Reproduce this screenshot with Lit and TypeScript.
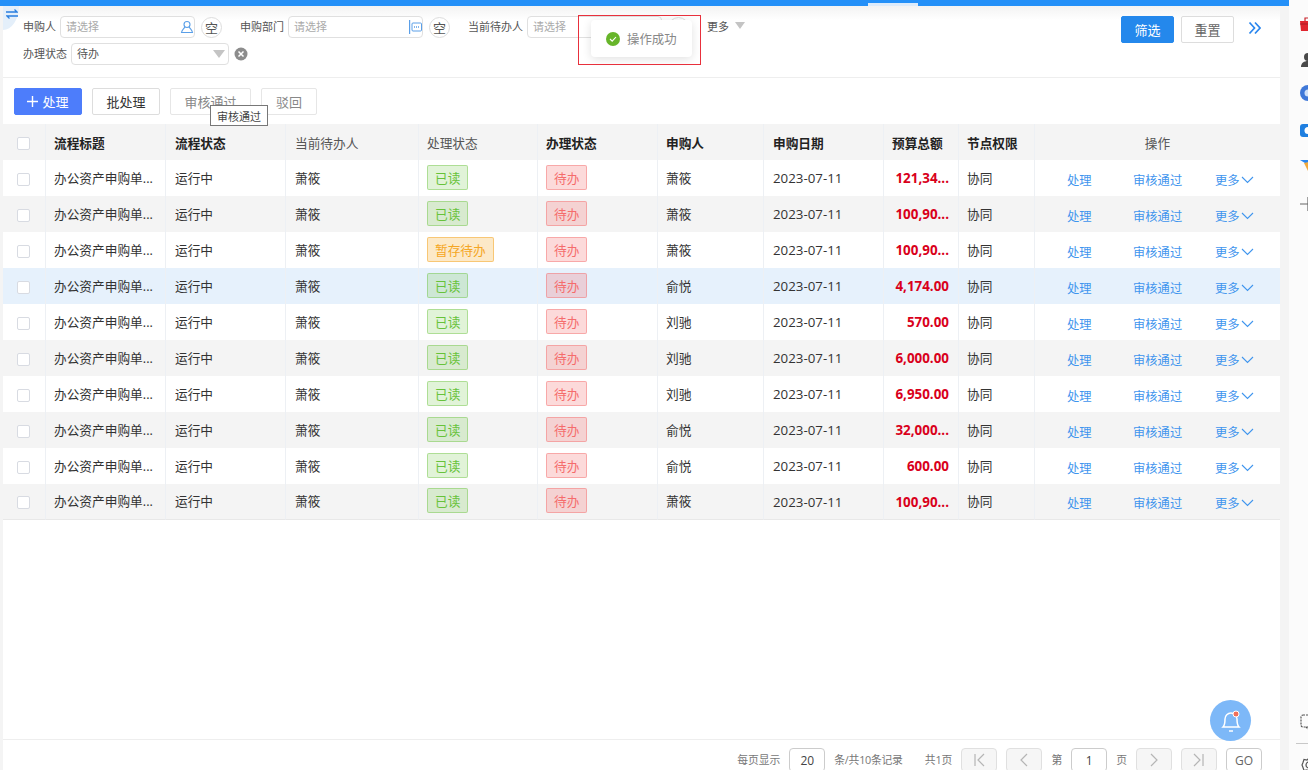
import { LitElement, css, html, svg } from "lit";
import { customElement } from "lit/decorators.js";

const rows = [
  { read: "已读", applicant: "萧筱", budget: "121,34..." },
  { read: "已读", applicant: "萧筱", budget: "100,90..." },
  { read: "暂存待办", applicant: "萧筱", budget: "100,90..." },
  { read: "已读", applicant: "俞悦", budget: "4,174.00", active: true },
  { read: "已读", applicant: "刘驰", budget: "570.00" },
  { read: "已读", applicant: "刘驰", budget: "6,000.00" },
  { read: "已读", applicant: "刘驰", budget: "6,950.00" },
  { read: "已读", applicant: "俞悦", budget: "32,000..." },
  { read: "已读", applicant: "俞悦", budget: "600.00" },
  { read: "已读", applicant: "萧筱", budget: "100,90..." },
];

const pagerIcon = (d: string) =>
  html`<svg width="14" height="16" viewBox="0 0 14 16" fill="none" stroke="#b5b5b5" stroke-width="1.2">${svg`<path d=${d} />`}</svg>`;

@customElement("app-root")
export class AppRoot extends LitElement {
  static styles = css`
    :host {
      display: block;
      font-family: "Open Sans", "Noto Sans CJK SC", sans-serif;
      color: #333;
    }
    * {
      box-sizing: border-box;
    }
    .page {
      position: relative;
      display: flex;
      height: 770px;
      overflow: hidden;
      background: #fbfbfb;
    }
    .main {
      width: 1289px;
      display: flex;
      flex-direction: column;
      background: #f4f4f4;
    }
    .top-bar {
      height: 6px;
      flex: none;
      display: flex;
      align-items: flex-end;
      background: #2490f8;
    }
    .top-tab {
      width: 50px;
      height: 3px;
      margin-left: 868px;
      background: #dcebfb;
    }
    .content {
      flex: 1;
      width: 1277px;
      margin-left: 3px;
      display: flex;
      flex-direction: column;
      background: #fff;
    }

    /* filter panel */
    .filter-panel {
      height: 72px;
      flex: none;
      display: flex;
      justify-content: space-between;
      padding: 10px 19px 0 20px;
      border-bottom: 1px solid #eee;
      background: linear-gradient(#f3f3f3, #fff 14px);
    }
    .filter-rows {
      display: flex;
      flex-direction: column;
      gap: 5px;
    }
    .filter-row {
      display: flex;
      align-items: center;
      height: 22px;
      font-size: 11px;
      color: #555;
    }
    .label {
      margin-right: 4px;
      padding-bottom: 2px;
      white-space: nowrap;
    }
    .input {
      width: 135px;
      height: 22px;
      display: flex;
      align-items: center;
      justify-content: space-between;
      padding: 0 0 2px 5px;
      border: 1px solid #e0e0e0;
      border-radius: 4px;
      background: #fff;
      color: #aaa;
    }
    .input svg {
      margin-top: 2px;
    }
    .input.select {
      width: 158px;
      padding-right: 3px;
      color: #555;
    }
    .input .caret {
      margin-top: 2px;
    }
    .empty {
      width: 21px;
      height: 21px;
      margin: 0 18px 0 6px;
      display: flex;
      align-items: center;
      justify-content: center;
      border: 1px solid #ddd;
      border-radius: 50%;
      font-size: 13px;
    }
    .caret {
      width: 0;
      height: 0;
      border-left: 6px solid transparent;
      border-right: 6px solid transparent;
      border-top: 8px solid #c4c4c4;
    }
    .more {
      display: flex;
      align-items: center;
      gap: 6px;
      margin-top: -3px;
    }
    .more .caret {
      border-left-width: 5px;
      border-right-width: 5px;
      border-top-width: 7px;
    }
    .clear {
      margin-left: 5px;
    }
    .filter-actions {
      display: flex;
      align-items: flex-start;
      gap: 7px;
    }
    .btn {
      height: 27px;
      display: inline-flex;
      align-items: center;
      justify-content: center;
      padding: 0 13.5px;
      border: 1px solid #ddd;
      border-radius: 2px;
      background: #fff;
      font-size: 13px;
      white-space: nowrap;
    }
    .filter-actions .btn {
      width: 53px;
      padding: 0;
      color: #666;
    }
    .filter-actions .btn.search {
      border-color: #2488ec;
      background: #2488ec;
      color: #fff;
    }
    .expand {
      margin: 5px 0 0 7px;
    }

    /* action bar */
    .action-bar {
      height: 46px;
      flex: none;
      display: flex;
      align-items: flex-start;
      gap: 10px;
      padding: 10px 0 0 11px;
    }
    .btn.primary {
      gap: 4px;
      width: 68px;
      padding: 0;
      border-color: #4d7dfb;
      background: #4d7dfb;
      color: #fff;
    }
    .btn.disabled {
      color: #888;
      border-color: #e6e6e6;
    }
    .btn.reject {
      padding: 0 14px;
    }

    /* table */
    table {
      width: 1277px;
      border-collapse: separate;
      border-spacing: 0;
      table-layout: fixed;
      font-size: 12.7px;
    }
    th,
    td {
      height: 36px;
      padding: 0 8px;
      border-right: 1px solid #edf0f4;
      text-align: left;
      white-space: nowrap;
      overflow: hidden;
    }
    td {
      padding-bottom: 2px;
    }
    th:nth-child(3),
    td:nth-child(3),
    th:nth-child(4),
    td:nth-child(4),
    th:nth-child(8),
    td:nth-child(8) {
      padding-left: 9px;
    }
    th:last-child,
    td:last-child {
      border-right: 0;
    }
    th {
      background: #f4f4f4;
      font-weight: 400;
      color: #555;
    }
    th.strong {
      font-weight: 700;
      color: #222;
    }
    th.center {
      text-align: center;
    }
    tr.striped td {
      background: #f4f4f4;
    }
    tr.active td {
      background: #e6f1fc;
    }
    tbody tr:last-child td {
      border-bottom: 1px solid #e8e8e8;
    }
    th.check-cell,
    td.check-cell {
      padding: 0 0 0 14px;
    }
    .check {
      display: block;
      width: 13px;
      height: 13px;
      margin-top: 2px;
      border: 1px solid #d8dbe2;
      border-radius: 2px;
      background: #fff;
    }
    .tag {
      display: flex;
      align-items: center;
      width: fit-content;
      height: 25px;
      padding: 0 7px;
      border: 1px solid;
      border-radius: 2px;
      font-size: 12.7px;
    }
    .tag.green {
      color: #67c23a;
      border-color: rgba(103, 194, 58, 0.42);
      background: rgba(103, 194, 58, 0.2);
    }
    .tag.orange {
      color: #f5a623;
      border-color: rgba(245, 166, 35, 0.5);
      background: rgba(245, 166, 35, 0.25);
    }
    .tag.red {
      color: #f56c6c;
      border-color: rgba(245, 108, 108, 0.45);
      background: rgba(245, 108, 108, 0.25);
    }
    td.date {
      padding-bottom: 0;
      font-size: 13.3px;
    }
    td.budget {
      padding-right: 9px;
      padding-bottom: 0;
      text-align: right;
      font-size: 13.4px;
      font-weight: 700;
      color: #d9001b;
    }
    .ops {
      display: grid;
      grid-template-columns: 66px 82px auto;
      padding: 5px 0 0 24px;
      font-size: 12.3px;
      color: #3f95ee;
    }
    .ops span {
      display: inline-flex;
      align-items: center;
      gap: 1px;
    }

    /* footer */
    .footer {
      height: 31px;
      flex: none;
      margin-top: auto;
      display: flex;
      justify-content: flex-end;
      gap: 9px;
      padding: 8px 18px 0 0;
      border-top: 1px solid #eee;
      font-size: 10.8px;
      color: #777;
    }
    .footer > span {
      line-height: 23px;
    }
    .footer .spaced {
      margin-right: 13px;
      letter-spacing: -0.25px;
    }
    .page-input,
    .page-btn {
      width: 36px;
      height: 24px;
      flex: none;
      display: flex;
      align-items: center;
      justify-content: center;
      border: 1px solid #ccc;
      border-radius: 4px;
      font-size: 12px;
      color: #444;
    }
    .page-btn {
      border-color: #e0e0e0;
      background: #f6f6f6;
    }
    .page-btn.go {
      border-color: #ccc;
      background: #fff;
      color: #666;
    }

    /* right side strip */
    .side-strip {
      flex: 1;
      display: flex;
      flex-direction: column;
      padding: 16px 0 0 11px;
      overflow: hidden;
    }
    .side-strip svg {
      display: block;
    }
    .side-icons {
      display: grid;
      grid-template-rows: 36px 33px 37px 35px 39px 16px;
    }
    .side-low {
      margin-top: auto;
      margin-bottom: -3px;
      display: flex;
      flex-direction: column;
      gap: 13px;
    }
    .side-rule {
      width: 20px;
      height: 1px;
      margin-left: -4px;
      background: #c8c8c8;
    }

    /* overlays */
    .swap {
      position: absolute;
      left: 3px;
      top: 6px;
      width: 16px;
      height: 24px;
      display: flex;
      align-items: flex-start;
      padding: 3px 0 0 3px;
      border-bottom-right-radius: 100%;
      background: #e4effa;
    }
    .tooltip {
      position: absolute;
      left: 210px;
      top: 105px;
      width: 58px;
      height: 21px;
      display: flex;
      align-items: center;
      justify-content: center;
      border: 1px solid #777;
      background: #fff;
      font-size: 11px;
      color: #444;
    }
    .toast {
      position: absolute;
      left: 591px;
      top: 20px;
      width: 101px;
      height: 37px;
      display: flex;
      align-items: center;
      gap: 7px;
      padding-left: 15px;
      border-radius: 4px;
      background: #fff;
      box-shadow: 0 2px 10px rgba(0, 0, 0, 0.12);
      font-size: 12.4px;
      color: #888;
    }
    .toast-mark {
      position: absolute;
      left: 578px;
      top: 15px;
      width: 123px;
      height: 50px;
      border: 1px solid #e8303c;
    }
    .bell {
      position: absolute;
      left: 1210px;
      top: 700px;
      width: 41px;
      height: 41px;
      display: flex;
      align-items: center;
      justify-content: center;
      border-radius: 50%;
      background: #7db8f8;
    }
  `;

  private renderRow(row: (typeof rows)[number], i: number) {
    const cls = row.active ? "active" : i % 2 ? "striped" : "";
    return html`
      <tr class=${cls}>
        <td class="check-cell"><span class="check"></span></td>
        <td>办公资产申购单...</td>
        <td>运行中</td>
        <td>萧筱</td>
        <td><span class="tag ${row.read === "已读" ? "green" : "orange"}">${row.read}</span></td>
        <td><span class="tag red">待办</span></td>
        <td>${row.applicant}</td>
        <td class="date">2023-07-11</td>
        <td class="budget">${row.budget}</td>
        <td>协同</td>
        <td>
          <div class="ops">
            <span>处理</span>
            <span>审核通过</span>
            <span>更多<svg width="13" height="8" viewBox="0 0 13 8" fill="none" stroke="#3f95ee" stroke-width="1.1"><path d="M1 1l5.500 5.500L12 1" /></svg></span>
          </div>
        </td>
      </tr>
    `;
  }

  render() {
    return html`
      <div class="page">
        <div class="main">
          <div class="top-bar"><div class="top-tab"></div></div>
          <div class="content">
            <div class="filter-panel">
              <div class="filter-rows">
                <div class="filter-row">
                  <span class="label">申购人</span>
                  <div class="input">
                    请选择
                    <svg width="14" height="14" viewBox="0 0 14 14" fill="none" stroke="#5a9fe8" stroke-width="1.1"><circle cx="7" cy="4.500" r="3" /><path d="M4.800 7C4 9 2 9.500 1.500 12.500h11C12 9.500 10 9 9.200 7" /></svg>
                  </div>
                  <span class="empty">空</span>
                  <span class="label">申购部门</span>
                  <div class="input">
                    请选择
                    <svg width="13" height="14" viewBox="0 0 13 14" fill="none" stroke="#5a9fe8"><path d="M.6 0v14" stroke-width="1.200" /><rect x="3" y="3" width="9.500" height="8" rx="1" /><path d="M5 7h5.500" stroke-dasharray="1 1" stroke-width="1.500" /></svg>
                  </div>
                  <span class="empty">空</span>
                  <span class="label">当前待办人</span>
                  <div class="input">请选择</div>
                  <span class="empty">空</span>
                  <div class="more">更多<span class="caret"></span></div>
                </div>
                <div class="filter-row">
                  <span class="label">办理状态</span>
                  <div class="input select">待办<span class="caret"></span></div>
                  <svg class="clear" width="14" height="14" viewBox="0 0 14 14"><circle cx="7" cy="7" r="6.500" fill="#8c8c8c" /><path d="M4.500 4.500l5 5M9.500 4.500l-5 5" stroke="#fff" stroke-width="1.500" /></svg>
                </div>
              </div>
              <div class="filter-actions">
                <span class="btn search">筛选</span>
                <span class="btn">重置</span>
                <svg class="expand" width="13" height="14" viewBox="0 0 13 14" fill="none" stroke="#2a86ee" stroke-width="1.700"><path d="M1.500 1.500L6.500 7l-5 5.500M7 1.500L12 7l-5 5.500" /></svg>
              </div>
            </div>

            <div class="action-bar">
              <span class="btn primary">
                <svg width="11" height="11" viewBox="0 0 11 11" stroke="#fff" stroke-width="1.400"><path d="M5.500 0v11M0 5.500h11" /></svg>
                处理
              </span>
              <span class="btn">批处理</span>
              <span class="btn disabled">审核通过</span>
              <span class="btn disabled reject">驳回</span>
            </div>

            <table>
              <colgroup>
                <col style="width:43px" />
                <col style="width:120px" />
                <col style="width:120px" />
                <col style="width:133px" />
                <col style="width:119px" />
                <col style="width:120px" />
                <col style="width:106px" />
                <col style="width:120px" />
                <col style="width:75px" />
                <col style="width:76px" />
                <col />
              </colgroup>
              <thead>
                <tr>
                  <th class="check-cell"><span class="check"></span></th>
                  <th class="strong">流程标题</th>
                  <th class="strong">流程状态</th>
                  <th>当前待办人</th>
                  <th>处理状态</th>
                  <th class="strong">办理状态</th>
                  <th class="strong">申购人</th>
                  <th class="strong">申购日期</th>
                  <th class="strong">预算总额</th>
                  <th class="strong">节点权限</th>
                  <th class="center">操作</th>
                </tr>
              </thead>
              <tbody>${rows.map((r, i) => this.renderRow(r, i))}</tbody>
            </table>

            <div class="footer">
              <span>每页显示</span>
              <div class="page-input">20</div>
              <span class="spaced">条/共10条记录</span>
              <span>共1页</span>
              <div class="page-btn">${pagerIcon("M3 2v12M12 2L6 8l6 6")}</div>
              <div class="page-btn">${pagerIcon("M10 2L4 8l6 6")}</div>
              <span>第</span>
              <div class="page-input">1</div>
              <span>页</span>
              <div class="page-btn">${pagerIcon("M4 2l6 6-6 6")}</div>
              <div class="page-btn">${pagerIcon("M2 2l6 6-6 6M11 2v12")}</div>
              <div class="page-btn go">GO</div>
            </div>
          </div>
        </div>

        <div class="side-strip">
          <div class="side-icons">
            <svg width="16" height="16" viewBox="0 0 16 16"><path d="M5 5V2h6v3" fill="none" stroke="#c9252d" stroke-width="1.200" /><path d="M0 5h16l-1 10H1z" fill="#e0262f" /><path d="M0 8h16" stroke="#a81d24" /></svg>
            <svg width="16" height="16" viewBox="0 0 16 16" fill="#4a4a4a"><circle cx="8" cy="5" r="4" /><path d="M1 15c0-4 3-6 7-6s7 2 7 6z" /></svg>
            <svg width="16" height="16" viewBox="0 0 16 16"><circle cx="8" cy="8" r="8" fill="#3f78d8" /><path d="M8 0a8 8 0 0 1 7 4H8z" fill="#e8a13a" /><circle cx="8" cy="8" r="3.500" fill="#cfe0f8" /></svg>
            <svg width="16" height="16" viewBox="0 0 16 16"><rect y="2" width="16" height="13" rx="3" fill="#1f7fe0" /><circle cx="8" cy="8.500" r="3.500" fill="#fff" /></svg>
            <svg width="16" height="16" viewBox="0 0 16 16"><path d="M0 3h16v2L5 6z" fill="#2a86ee" /><path d="M4 6l12-2v8l-8 2z" fill="#f2a93b" /></svg>
            <svg width="16" height="16" viewBox="0 0 16 16" stroke="#666" stroke-width="1.200"><path d="M0 8h16M8 1v14" /></svg>
          </div>
          <div class="side-low">
            <svg width="16" height="16" viewBox="0 0 16 16" fill="none" stroke="#555" stroke-width="1.200" stroke-dasharray="2 1"><rect x="1" y="1" width="12" height="12" rx="2" /><path d="M6 13l3 3 4-3" /></svg>
            <div class="side-rule"></div>
            <svg width="16" height="16" viewBox="0 0 16 16" fill="none" stroke="#555" stroke-width="1.200"><circle cx="9" cy="8" r="3" /><path d="M9 1l2 2 3-.5 1 3 1 2.500-1 2.500-1 3-3-.5-2 2-2-2-3 .5-1-3L2 8l1-2.500 1-3 3 .5z" /></svg>
          </div>
        </div>

        <div class="swap">
          <svg width="12" height="10" viewBox="0 0 12 10" fill="none" stroke="#2a7fe0" stroke-width="1.300"><path d="M0 3h11L8.500 .5M12 7H1l2.500 2.500" /></svg>
        </div>
        <div class="tooltip">审核通过</div>
        <div class="toast">
          <svg width="14" height="14" viewBox="0 0 14 14"><circle cx="7" cy="7" r="7" fill="#67b52a" /><path d="M4 7l2.200 2.200L10 5" fill="none" stroke="#fff" stroke-width="1.100" /></svg>
          操作成功
        </div>
        <div class="toast-mark"></div>
        <div class="bell">
          <svg width="22" height="26" viewBox="0 0 22 26" fill="none" stroke="#fff" stroke-width="1.500">
            <path d="M3 19c2-2 2-5 2-8a6 6 0 0 1 12 0c0 3 0 6 2 8z" />
            <path d="M9 23h4" />
            <circle cx="16" cy="6" r="3" fill="#f0705c" stroke="#fff" stroke-width="1" />
          </svg>
        </div>
      </div>
    `;
  }
}
